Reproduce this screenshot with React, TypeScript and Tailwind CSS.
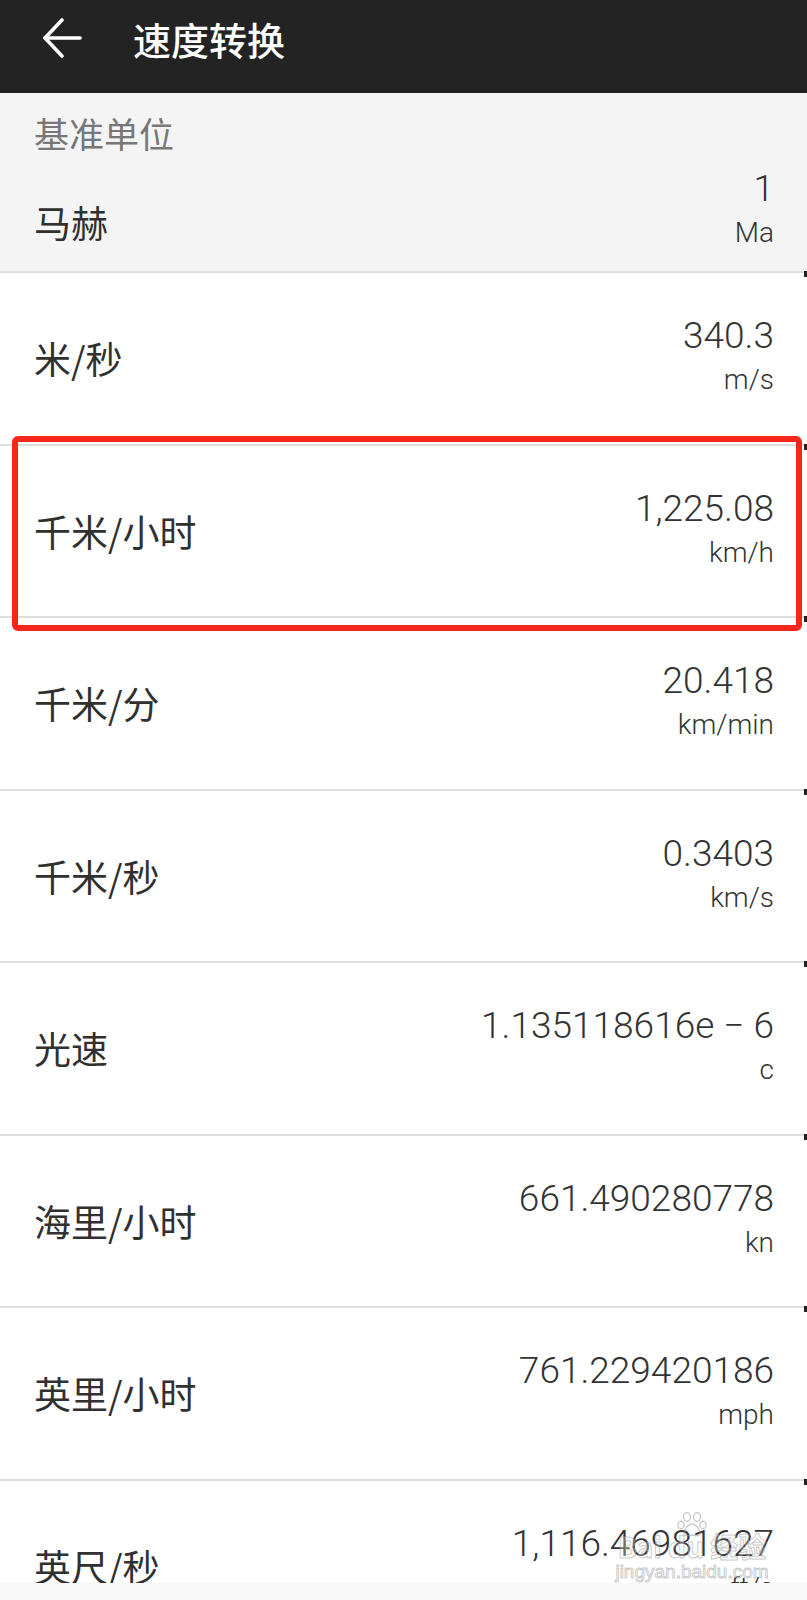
import React from 'react';

// Conversion rows shown under the base unit
const rows = [
  { label: '米/秒', value: '340.3', unit: 'm/s' },
  { label: '千米/小时', value: '1,225.08', unit: 'km/h' },
  { label: '千米/分', value: '20.418', unit: 'km/min' },
  { label: '千米/秒', value: '0.3403', unit: 'km/s' },
  { label: '光速', value: '1.135118616e − 6', unit: 'c' },
  { label: '海里/小时', value: '661.490280778', unit: 'kn' },
  { label: '英里/小时', value: '761.229420186', unit: 'mph' },
  { label: '英尺/秒', value: '1,116.46981627', unit: 'ft/s' },
];

const cjk = "font-['Noto_Sans_CJK_SC',sans-serif]";
const num = "font-['Roboto','Noto_Sans_CJK_SC',sans-serif] font-light";

function Divider() {
  return (
    <div className="flex h-[2px] w-full">
      <div className="flex-1 bg-[#dedede]" />
      <div className="h-[6px] w-[3px] bg-[#222]" />
    </div>
  );
}

function BackArrow() {
  return (
    <svg width="40" height="40" viewBox="0 0 40 40" fill="none" stroke="white" strokeWidth="3.6" strokeLinecap="round" strokeLinejoin="round">
      <path d="M38 20H3" />
      <path d="M20 2L3 20L20 38" />
    </svg>
  );
}

export default function App() {
  return (
    <div className="relative h-[1600px] w-[807px] overflow-hidden bg-white">
      {/* Header */}
      <header className="flex h-[93px] items-start bg-[#232323] pt-[17px]">
        <div className="ml-[42px] mt-[1px]">
          <BackArrow />
        </div>
        <h1 className={`ml-[51px] text-[38px] font-medium leading-[44px] text-white ${cjk}`}>速度转换</h1>
      </header>

      {/* Base unit */}
      <section className="bg-[#f4f4f4]">
        <div className="flex flex-col pb-[16px] pl-[34px] pr-[33px] pt-[18px]">
          <p className={`text-[35px] leading-[44px] text-[#777] ${cjk}`}>基准单位</p>
          <div className="mt-[12px] flex items-end justify-between">
            <span className={`mb-[11px] text-[37px] leading-[44px] text-[#303030] ${cjk}`}>马赫</span>
            <div className="flex flex-col items-end">
              <span className={`text-[37px] leading-[44px] text-[#333] ${num}`}>1</span>
              <span className={`text-[28px] leading-[44px] text-[#333] ${num}`}>Ma</span>
            </div>
          </div>
        </div>
        <Divider />
      </section>

      {/* Converted values */}
      <div className="flex flex-col">
        {rows.map((row) => (
          <div key={row.label} className="flex h-[172.5px] flex-col">
            <div className="flex flex-1 items-center justify-between pl-[34px] pr-[33px]">
              <span className={`text-[37px] leading-[44px] text-[#303030] ${cjk}`}>{row.label}</span>
              <div className="flex flex-col items-end">
                <span className={`whitespace-pre text-[37px] leading-[44px] text-[#333] ${num}`}>{row.value}</span>
                <span className={`text-[28px] leading-[44px] text-[#333] ${num}`}>{row.unit}</span>
              </div>
            </div>
            <Divider />
          </div>
        ))}
      </div>

      {/* Highlight annotation */}
      <div className="absolute left-[12px] top-[436px] h-[195px] w-[790px] rounded-[6px] border-[6px] border-[#f5261b]" />

      {/* Bottom strip */}
      <div className="absolute bottom-0 left-0 h-[17px] w-full bg-[#f8f8f8]" />

      {/* Watermark */}
      <div className="absolute left-[612px] top-[1511px] flex w-[160px] flex-col items-center">
        <svg width="30" height="26" viewBox="0 0 30 26" fill="none" stroke="rgba(150,150,150,0.5)" strokeWidth="1.4">
          <ellipse cx="10" cy="6" rx="3.5" ry="4.5" />
          <ellipse cx="20" cy="6" rx="3.5" ry="4.5" />
          <ellipse cx="4" cy="14" rx="3" ry="3.8" />
          <ellipse cx="26" cy="14" rx="3" ry="3.8" />
          <path d="M15 13c-4 0-8 6-8 9s3 3 8 2c5 1 8 1 8-2s-4-9-8-9z" />
        </svg>
        <span className={`-mt-[6px] whitespace-nowrap text-[28px] font-bold leading-[30px] text-[rgba(255,255,255,0.3)] [-webkit-text-stroke:1px_rgba(150,150,150,0.5)] ${cjk}`}>Bai du 经验</span>
        <span className="font-['Liberation_Sans',sans-serif] text-[19px] leading-[22px] text-[rgba(255,255,255,0.3)] [-webkit-text-stroke:1px_rgba(150,150,150,0.5)]">jingyan.baidu.com</span>
      </div>
    </div>
  );
}
